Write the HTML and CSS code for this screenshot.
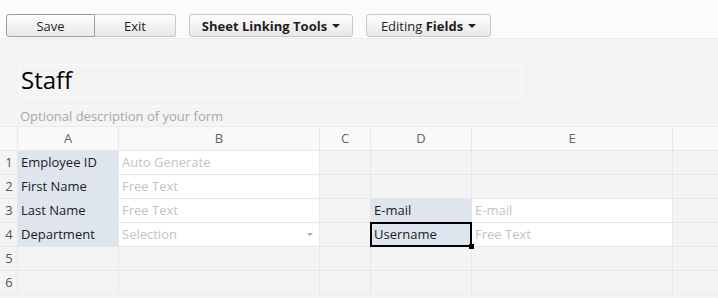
FILE: index.html
```html
<!DOCTYPE html>
<html lang="en">

<head>
  <meta charset="UTF-8">
  <meta name="viewport" content="width=device-width, initial-scale=1.0">
  <title>Staff</title>
  <link rel="stylesheet" href="styles.css">
</head>

<body>

  <header class="toolbar">
    <div class="toolbar__group">
      <button class="btn btn_first btn_active">Save</button>
      <button class="btn btn_last btn_exit">Exit</button>
    </div>
    <button class="btn btn_link"><span><b>Sheet Linking Tools</b></span><span class="caret"></span></button>
    <button class="btn btn_fields"><span>Editing <b>Fields</b></span><span class="caret"></span></button>
  </header>

  <section class="form-head">
    <div class="form-head__title">Staff</div>
    <div class="form-head__desc">Optional description of your form</div>
  </section>

  <div class="sheet">
    <div class="sheet__corner"></div>
    <div class="sheet__col">A</div>
    <div class="sheet__col">B</div>
    <div class="sheet__col">C</div>
    <div class="sheet__col">D</div>
    <div class="sheet__col">E</div>
    <div class="sheet__col"></div>

    <div class="sheet__num">1</div>
    <div class="cell cell_label">Employee ID</div>
    <div class="cell cell_input">Auto Generate</div>
    <div class="cell"></div>
    <div class="cell"></div>
    <div class="cell"></div>
    <div class="cell"></div>

    <div class="sheet__num">2</div>
    <div class="cell cell_label">First Name</div>
    <div class="cell cell_input">Free Text</div>
    <div class="cell"></div>
    <div class="cell"></div>
    <div class="cell"></div>
    <div class="cell"></div>

    <div class="sheet__num">3</div>
    <div class="cell cell_label">Last Name</div>
    <div class="cell cell_input">Free Text</div>
    <div class="cell"></div>
    <div class="cell cell_label">E-mail</div>
    <div class="cell cell_input">E-mail</div>
    <div class="cell"></div>

    <div class="sheet__num">4</div>
    <div class="cell cell_label">Department</div>
    <div class="cell cell_input cell_select">Selection<span class="cell__arrow"></span></div>
    <div class="cell"></div>
    <div class="cell cell_label cell_selected">Username</div>
    <div class="cell cell_input">Free Text</div>
    <div class="cell"></div>

    <div class="sheet__num">5</div>
    <div class="cell"></div>
    <div class="cell"></div>
    <div class="cell"></div>
    <div class="cell"></div>
    <div class="cell"></div>
    <div class="cell"></div>

    <div class="sheet__num">6</div>
    <div class="cell"></div>
    <div class="cell"></div>
    <div class="cell"></div>
    <div class="cell"></div>
    <div class="cell"></div>
    <div class="cell"></div>
  </div>

</body>
</html>
```

FILE: styles.css
```css
* {
  box-sizing: border-box;
}

body {
  margin: 0;
  background-color: #f4f4f4;
  font-family: "Open Sans", "DejaVu Sans", sans-serif;
  font-size: 13px;
  color: #1e1e1e;
  overflow: hidden;
}

.toolbar {
  height: 39px;
  background-color: #fbfbfb;
  border-bottom: 1px solid #ececec;
  display: flex;
  align-items: flex-start;
  padding: 14px 0 0 6px;
  gap: 13px;
}

.toolbar__group {
  display: flex;
}

.btn {
  height: 23px;
  padding: 0;
  border: 1px solid #c8c8c8;
  border-radius: 3px;
  background: linear-gradient(#fdfdfd, #e8e8e8);
  font-family: inherit;
  font-size: 13px;
  color: #1e1e1e;
  display: flex;
  align-items: center;
  justify-content: center;
  cursor: pointer;
}

.btn b {
  font-weight: 700;
}

.btn_first {
  width: 89px;
  border-radius: 3px 0 0 3px;
}

.btn_last {
  width: 81px;
  border-radius: 0 3px 3px 0;
  border-left: none;
}

.btn_active {
  border-color: #9d9d9d;
}

.btn_link {
  width: 164px;
}

.btn_fields {
  width: 125px;
}

.caret {
  display: inline-block;
  width: 0;
  height: 0;
  margin-left: 5px;
  border-left: 4px solid transparent;
  border-right: 4px solid transparent;
  border-top: 4px solid #222;
}

.form-head {
  padding: 25px 0 0 19px;
}

.form-head__title {
  width: 503px;
  height: 34px;
  border: 1px solid #fafafa;
  font-size: 24px;
  line-height: 30px;
  padding-left: 1px;
  color: #000;
}

.form-head__desc {
  margin-top: 8px;
  height: 20px;
  border-top: 1px solid #fafafa;
  font-size: 13px;
  line-height: 19px;
  padding-left: 1px;
  color: #a8a8a8;
}

.sheet {
  display: grid;
  grid-template-columns: 17px 100px 200px 50px 100px 200px 1fr;
  grid-auto-rows: 23px;
  gap: 1px;
  background-color: #e8e8e8;
  border-top: 1px solid #ebebeb;
  border-bottom: 1px solid #ebebeb;
}

.sheet__corner,
.sheet__col {
  background-color: #f9f9f9;
}

.sheet__col {
  text-align: center;
  line-height: 23px;
  color: #666;
}

.sheet__num {
  background-color: #f4f4f4;
  text-align: center;
  line-height: 23px;
  color: #555;
  padding-left: 1px;
}

.cell {
  position: relative;
  background-color: #f4f4f4;
  line-height: 23px;
  padding-left: 3px;
  white-space: nowrap;
}

.cell_label {
  background-color: #dfe5ee;
  color: #1a1a1a;
}

.cell_input {
  background-color: #fff;
  color: #c3c3c3;
}

.cell_select {
  display: flex;
  justify-content: space-between;
  align-items: center;
  padding-right: 6px;
}

.cell__arrow {
  width: 0;
  height: 0;
  border-left: 3px solid transparent;
  border-right: 3px solid transparent;
  border-top: 3px solid #aaa;
}

.cell_selected::after {
  content: '';
  position: absolute;
  top: -1px;
  left: -1px;
  right: -1px;
  bottom: -1px;
  border: 2px solid #000;
}

.cell_selected::before {
  content: '';
  position: absolute;
  right: -3px;
  bottom: -3px;
  width: 5px;
  height: 5px;
  background-color: #000;
  z-index: 2;
}
```
